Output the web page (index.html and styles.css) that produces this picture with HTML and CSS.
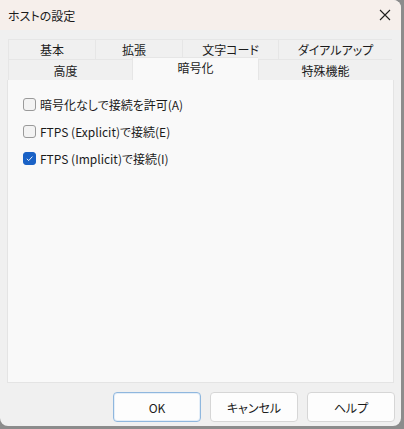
FILE: index.html
```html
<!DOCTYPE html>
<html lang="ja">
<head>
    <meta charset="UTF-8">
    <meta name="viewport" content="width=device-width, initial-scale=1.0">
    <title>ホストの設定</title>
    <link rel="stylesheet" href="styles.css">
</head>
<body>
    <div class="window">
        <div class="titlebar">
            <span class="title">ホストの設定</span>
            <span class="close">
                <svg width="12" height="12" viewBox="0 0 12 12">
                    <path d="M1 1 L11 11 M11 1 L1 11" stroke="#202020" stroke-width="1.1" fill="none"/>
                </svg>
            </span>
        </div>
        <div class="content">
            <div class="tabs">
                <div class="tab-row">
                    <div class="tab w87">基本</div>
                    <div class="tab w87 nudge">拡張</div>
                    <div class="tab w96">文字コード</div>
                    <div class="tab w114">ダイアルアップ</div>
                </div>
                <div class="tab-row row2">
                    <div class="tab w124 nudge">高度</div>
                    <div class="tab w126 active">暗号化</div>
                    <div class="tab w134">特殊機能</div>
                </div>
            </div>
            <div class="panel">
                <label class="check-row">
                    <span class="box"></span>
                    <span>暗号化なしで接続を許可(A)</span>
                </label>
                <label class="check-row">
                    <span class="box"></span>
                    <span>FTPS (Explicit)で接続(E)</span>
                </label>
                <label class="check-row">
                    <span class="box checked">
                        <svg width="9" height="9" viewBox="0 0 9 9">
                            <path d="M1.8 4.8 L3.7 6.6 L7.4 2.6" stroke="#ffffff" stroke-width="0.9" fill="none"/>
                        </svg>
                    </span>
                    <span>FTPS (Implicit)で接続(I)</span>
                </label>
            </div>
        </div>
        <div class="buttons">
            <button class="btn default">OK</button>
            <button class="btn">キャンセル</button>
            <button class="btn">ヘルプ</button>
        </div>
    </div>
</body>
</html>
```

FILE: styles.css
```css
body {
    margin: 0;
    padding: 0;
    background-color: #8c8c8c;
    font-family: "Noto Sans CJK JP", "Noto Sans", sans-serif;
    font-feature-settings: "palt";
    font-size: 12px;
    color: #1b1b1b;
}

.window {
    width: 401px;
    height: 426px;
    background-color: #f0f0f0;
    border-radius: 0 8px 8px 8px;
    display: flex;
    flex-direction: column;
    overflow: hidden;
}

.titlebar {
    height: 30px;
    background-color: #f6efeb;
    display: flex;
    align-items: center;
    justify-content: space-between;
    padding-left: 8px;
    padding-right: 10px;
}

.title {
    font-size: 12px;
}

.close {
    display: flex;
}

.content {
    padding: 9px 7px 0 7px;
}

.tabs {
    margin: 0 1px;
}

.tab-row {
    display: flex;
    height: 20px;
}

.row2 {
    height: 21px;
    align-items: flex-end;
}

.tab {
    box-sizing: border-box;
    height: 100%;
    display: flex;
    align-items: center;
    justify-content: center;
    background-color: #f0f0f0;
    border: 1px solid #e6e6e6;
    border-bottom: none;
    border-right: none;
    font-size: 12px;
}

.tab.nudge {
    padding-right: 10px;
}

.tab.active {
    height: 23px;
    margin-top: -2px;
    background-color: #f9f9f9;
    border-color: #e6e6e6;
    padding-bottom: 4px;
}

.w87 { width: 87px; }
.w96 { width: 96px; }
.w114 { width: 114px; }
.w124 { width: 124px; }
.w126 { width: 126px; }
.w134 { width: 134px; }

.panel {
    box-sizing: border-box;
    height: 303px;
    background-color: #f9f9f9;
    border: 1px solid #e4e4e4;
    border-top: none;
    padding: 14px 0 0 15px;
    display: flex;
    flex-direction: column;
    gap: 7px;
}

.check-row {
    display: flex;
    align-items: center;
    gap: 4px;
    height: 20px;
}

.box {
    box-sizing: border-box;
    width: 13px;
    height: 13px;
    border: 1px solid #9a9a9a;
    border-radius: 3px;
    background-color: #f3f3f3;
    display: flex;
    align-items: center;
    justify-content: center;
}

.box.checked {
    background-color: #1a62c6;
    border-color: #1a62c6;
}

.buttons {
    display: flex;
    justify-content: flex-end;
    gap: 9px;
    padding: 9px 6px 0 0;
}

.btn {
    width: 88px;
    height: 30px;
    background-color: #fdfdfd;
    border: 1px solid #d6d6d6;
    border-radius: 4px;
    font-family: "Noto Sans CJK JP", "Noto Sans", sans-serif;
    font-feature-settings: "palt";
    font-size: 12px;
    color: #1b1b1b;
}

.btn.default {
    border-color: #8fb7de;
    box-shadow: inset 0 0 0 1px #e4eef8;
}
```
